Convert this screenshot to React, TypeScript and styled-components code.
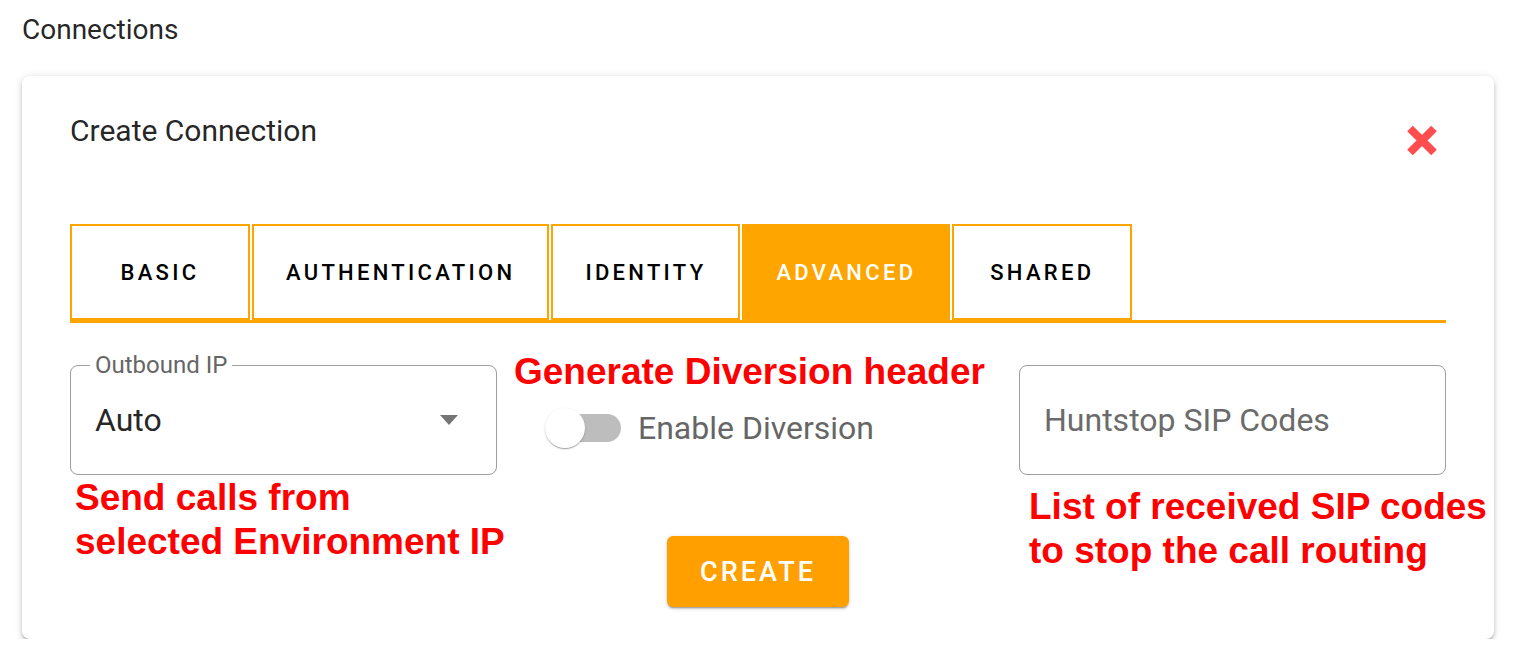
import React, { useState } from 'react';
import styled, { createGlobalStyle } from 'styled-components';

const ORANGE = '#ffa500';

const GlobalStyle = createGlobalStyle`
  html, body {
    margin: 0;
    padding: 0;
    background: #ffffff;
    font-family: Roboto, "Noto Sans", Arial, sans-serif;
    color: rgba(0, 0, 0, 0.87);
  }
  * {
    box-sizing: border-box;
  }
`;

const Page = styled.div`
  padding: 12px 31px 0 22px;
`;

const PageTitle = styled.h1`
  margin: 0;
  font-size: 28px;
  line-height: 36px;
  font-weight: 400;
`;

const Card = styled.div`
  margin-top: 28px;
  background: #fff;
  border-radius: 8px;
  box-shadow: 0 3px 3px -2px rgba(0, 0, 0, 0.25), 0 3px 4px 0 rgba(0, 0, 0, 0.16),
    0 1px 8px 0 rgba(0, 0, 0, 0.12);
  padding: 35px 48px 32px 48px;
`;

const CardHeader = styled.div`
  display: flex;
  justify-content: space-between;
  align-items: flex-start;
`;

const CardTitle = styled.h2`
  margin: 0;
  font-size: 30px;
  line-height: 40px;
  font-weight: 400;
`;

const CloseButton = styled.button`
  margin: 13px 8px 0 0;
  padding: 0;
  border: none;
  background: none;
  cursor: pointer;
  width: 32px;
  height: 33px;
  display: flex;
`;

const Tabs = styled.div`
  margin-top: 67px;
  display: flex;
  gap: 2px;
  border-bottom: 3px solid ${ORANGE};
`;

const Tab = styled.button<{ $active?: boolean }>`
  min-width: 180px;
  height: 96px;
  padding: 0 32px;
  border: 2px solid ${ORANGE};
  background: ${(p) => (p.$active ? ORANGE : '#fff')};
  color: ${(p) => (p.$active ? '#fff' : '#000')};
  font-family: Roboto, sans-serif;
  font-weight: 500;
  font-size: 22px;
  letter-spacing: 3.3px;
  text-transform: uppercase;
  cursor: pointer;
`;

const FormGrid = styled.div`
  margin-top: 27px;
  display: grid;
  grid-template-columns: 427px 1fr 427px;
  grid-template-rows: auto auto;
`;

const OutlineBox = styled.div`
  position: relative;
  margin-top: 15px;
  height: 110px;
  border: 1.5px solid #9e9e9e;
  border-radius: 8px;
  display: flex;
  align-items: center;
  padding: 0 38px 0 24px;
`;

const FloatLabel = styled.span`
  position: absolute;
  top: -13px;
  left: 19px;
  padding: 0 5px;
  background: #fff;
  font-size: 24px;
  line-height: 24px;
  color: #666;
`;

const SelectValue = styled.span`
  flex: 1;
  font-size: 32px;
  color: rgba(0, 0, 0, 0.87);
`;

const Placeholder = styled.span`
  font-size: 32px;
  color: #6b6b6b;
`;

const Note = styled.div<{ $indent: number; $offset?: number }>`
  font-family: "Liberation Sans", Arial, sans-serif;
  font-weight: 700;
  font-size: 37px;
  line-height: 44px;
  color: #ff0000;
  padding-left: ${(p) => p.$indent}px;
  margin-top: ${(p) => p.$offset ?? 0}px;
  white-space: nowrap;
`;

const MiddleColumn = styled.div`
  display: flex;
  flex-direction: column;
`;

const SwitchRow = styled.label`
  margin: 14px 0 0 48px;
  display: flex;
  align-items: center;
  gap: 17px;
  cursor: pointer;
`;

const SwitchTrack = styled.span`
  position: relative;
  width: 76px;
  height: 40px;
  display: inline-block;
  &::before {
    content: '';
    position: absolute;
    left: 8px;
    right: 0;
    top: 6px;
    height: 28px;
    border-radius: 14px;
    background: #bdbdbd;
  }
`;

const SwitchThumb = styled.span<{ $on: boolean }>`
  position: absolute;
  top: 0;
  left: ${(p) => (p.$on ? '36px' : '0')};
  width: 40px;
  height: 40px;
  border-radius: 50%;
  background: ${(p) => (p.$on ? ORANGE : '#fff')};
  box-shadow: 0 2px 1px -1px rgba(0, 0, 0, 0.2), 0 1px 1px 0 rgba(0, 0, 0, 0.14),
    0 1px 3px 0 rgba(0, 0, 0, 0.12);
`;

const SwitchLabel = styled.span`
  font-size: 32px;
  color: #666;
`;

const ButtonCell = styled.div`
  display: flex;
  justify-content: center;
  align-items: flex-start;
`;

const CreateButton = styled.button`
  margin-top: 61px;
  width: 182px;
  height: 71px;
  border: none;
  border-radius: 6px;
  background: #ffa000;
  color: #fff;
  font-family: Roboto, sans-serif;
  font-weight: 500;
  font-size: 27px;
  letter-spacing: 3px;
  box-shadow: 0 3px 1px -2px rgba(0, 0, 0, 0.2), 0 2px 2px 0 rgba(0, 0, 0, 0.14),
    0 1px 5px 0 rgba(0, 0, 0, 0.12);
  cursor: pointer;
`;

const tabs = ['Basic', 'Authentication', 'Identity', 'Advanced', 'Shared'];

const CloseIcon = () => (
  <svg width="32" height="33" viewBox="0 0 32 33">
    <path d="M4 4.5 L28 28.5 M28 4.5 L4 28.5" stroke="#ff4d4f" strokeWidth="8" />
  </svg>
);

const ArrowDown = () => (
  <svg width="18" height="10" viewBox="0 0 18 10">
    <path d="M0 0 L18 0 L9 10 Z" fill="#757575" />
  </svg>
);

export default function App() {
  const [active, setActive] = useState('Advanced');
  const [diversion, setDiversion] = useState(false);

  return (
    <>
      <GlobalStyle />
      <Page>
        <PageTitle>Connections</PageTitle>
        <Card>
          <CardHeader>
            <CardTitle>Create Connection</CardTitle>
            <CloseButton aria-label="close">
              <CloseIcon />
            </CloseButton>
          </CardHeader>

          <Tabs>
            {tabs.map((t) => (
              <Tab key={t} $active={active === t} onClick={() => setActive(t)}>
                {t}
              </Tab>
            ))}
          </Tabs>

          <FormGrid>
            <OutlineBox>
              <FloatLabel>Outbound IP</FloatLabel>
              <SelectValue>Auto</SelectValue>
              <ArrowDown />
            </OutlineBox>

            <MiddleColumn>
              <Note $indent={17}>Generate Diversion header</Note>
              <SwitchRow onClick={() => setDiversion(!diversion)}>
                <SwitchTrack>
                  <SwitchThumb $on={diversion} />
                </SwitchTrack>
                <SwitchLabel>Enable Diversion</SwitchLabel>
              </SwitchRow>
            </MiddleColumn>

            <OutlineBox>
              <Placeholder>Huntstop SIP Codes</Placeholder>
            </OutlineBox>

            <Note $indent={5} $offset={1}>
              Send calls from
              <br />
              selected Environment IP
            </Note>

            <ButtonCell>
              <CreateButton>CREATE</CreateButton>
            </ButtonCell>

            <Note $indent={10} $offset={10}>
              List of received SIP codes
              <br />
              to stop the call routing
            </Note>
          </FormGrid>
        </Card>
      </Page>
    </>
  );
}
